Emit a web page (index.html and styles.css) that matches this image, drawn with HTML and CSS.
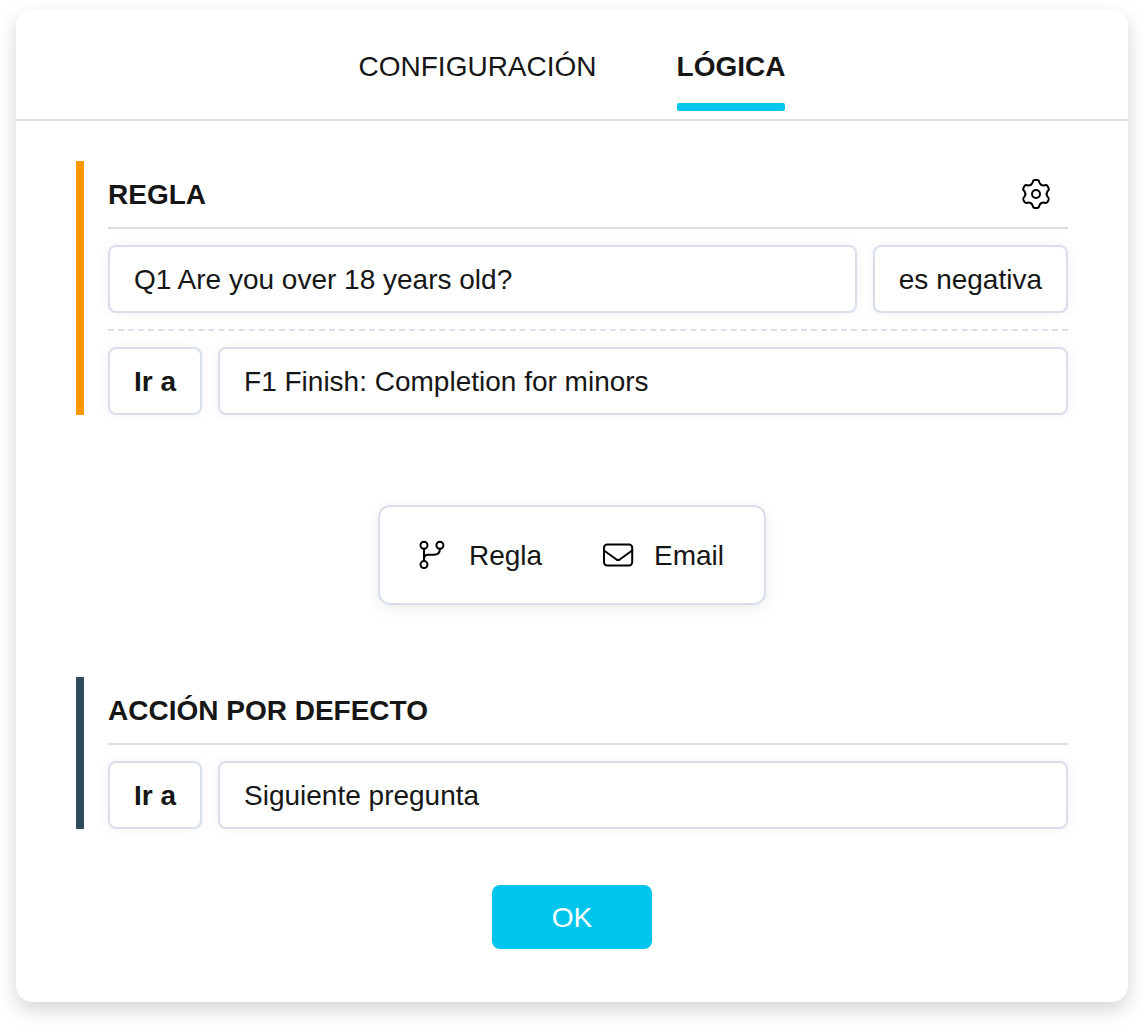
FILE: index.html
```html
<!DOCTYPE html>
<html lang="es">
<head>
  <meta charset="UTF-8" />
  <meta name="viewport" content="width=device-width, initial-scale=1.0">
  <title>Lógica</title>
  <link rel="stylesheet" href="styles.css">
</head>
<body>

  <div class="card">
    <nav class="tabs">
      <a class="tab">CONFIGURACIÓN</a>
      <a class="tab active">LÓGICA</a>
    </nav>

    <div class="content">
      <section class="block rule">
        <div class="block-header">
          <h2>REGLA</h2>
          <svg class="gear" viewBox="-18 -18 36 36">
            <path id="tooth" d="M-5.300-9.200C-3.900-10-3.600-10.500-3.300-11.700Q-2.900-13.900-1.200-13.900H1.200Q2.900-13.900 3.300-11.700C3.600-10.500 3.900-10 5.300-9.200" />
            <use href="#tooth" transform="rotate(60)" />
            <use href="#tooth" transform="rotate(120)" />
            <use href="#tooth" transform="rotate(180)" />
            <use href="#tooth" transform="rotate(240)" />
            <use href="#tooth" transform="rotate(300)" />
            <circle r="4" />
          </svg>
        </div>
        <div class="row">
          <div class="field grow">Q1 Are you over 18 years old?</div>
          <div class="field">es negativa</div>
        </div>
        <div class="row dashed">
          <div class="field strong">Ir a</div>
          <div class="field grow">F1 Finish: Completion for minors</div>
        </div>
      </section>

      <div class="add-menu">
        <div class="add-item">
          <svg class="icon branch" viewBox="0 0 26 30">
            <circle cx="5" cy="5.300" r="3.500" />
            <circle cx="20.900" cy="5.300" r="3.500" />
            <circle cx="5" cy="24.600" r="3.500" />
            <path d="M5 8.800v12.300M5 19c0-2.600 1.800-4.200 4.500-4.200h5.500c3.600 0 5.900-2.200 5.900-6" />
          </svg>
          <span>Regla</span>
        </div>
        <div class="add-item">
          <svg class="icon mail" viewBox="0 0 32 30">
            <rect x="2" y="4.500" width="28.200" height="21" rx="3.200" />
            <path d="M2 10.500l12.200 8.800q1.900 1.300 3.800 0l12.200-8.800" />
          </svg>
          <span>Email</span>
        </div>
      </div>

      <section class="block default">
        <div class="block-header">
          <h2>ACCIÓN POR DEFECTO</h2>
        </div>
        <div class="row">
          <div class="field strong">Ir a</div>
          <div class="field grow">Siguiente pregunta</div>
        </div>
      </section>

      <button class="btn">OK</button>
    </div>
  </div>

</body>
</html>
```
FILE: styles.css
```css
:root {
  --primary: #00c6ee;
  --text: #161616;
  --border: #d8dfea;
  --rule: #ff9800;
  --default: #2f4b5e;
  --white: #fff;
}

* {
  box-sizing: border-box;
}

body {
  font-family: 'Liberation Sans', Arial, sans-serif;
  font-size: 28px;
  line-height: 32px;
  color: var(--text);
  background: var(--white);
  margin: 0;
  padding: 10px 16px 30px;
}

.card {
  background: var(--white);
  height: 992px;
  border-radius: 16px;
  box-shadow: 0 8px 20px rgba(0,0,0,0.17);
}

.tabs {
  display: flex;
  justify-content: center;
  align-items: flex-end;
  gap: 80px;
  height: 111px;
  padding-bottom: 8px;
  border-bottom: 2px solid var(--border);
}

.tab {
  height: 60px;
}

.tab.active {
  font-weight: bold;
}

.tab.active::after {
  content: "";
  display: block;
  height: 8px;
  margin-top: 20px;
  border-radius: 2px;
  background: var(--primary);
}

.content {
  display: flex;
  flex-direction: column;
  align-items: center;
  padding: 40px 60px 0;
}

.block {
  width: 100%;
  padding-left: 24px;
  border-left: 8px solid;
}

.block.rule {
  border-color: var(--rule);
}

.block.default {
  border-color: var(--default);
}

.block-header {
  display: flex;
  justify-content: space-between;
  align-items: center;
  height: 68px;
  padding-right: 14px;
  margin-bottom: 16px;
  border-bottom: 2px solid var(--border);
}

h2 {
  font-size: 28px;
  margin: 0;
  padding-top: 2px;
}

svg {
  fill: none;
  stroke: #000;
  stroke-linecap: round;
  stroke-linejoin: round;
}

.gear {
  width: 36px;
  height: 36px;
  stroke-width: 2;
}

.row {
  display: flex;
  gap: 16px;
}

.row.dashed {
  margin-top: 16px;
  padding-top: 16px;
  border-top: 2px dashed var(--border);
}

.field {
  height: 68px;
  padding: 17px 24px;
  background: var(--white);
  border: 2px solid var(--border);
  border-radius: 8px;
  box-shadow: 0 0 12px rgba(0,0,0,0.06);
  white-space: nowrap;
}

.grow {
  flex: 1;
}

.strong {
  font-weight: bold;
}

.add-menu {
  display: flex;
  align-items: center;
  justify-content: space-between;
  width: 388px;
  height: 100px;
  margin: 90px 0 72px;
  padding: 0 40px 0 39px;
  border: 2px solid var(--border);
  border-radius: 12px;
  box-shadow: 0 4px 16px rgba(0,0,0,0.08);
}

.add-item {
  display: flex;
  align-items: center;
}

.add-item span {
  padding-top: 2px;
}

.icon {
  height: 30px;
  stroke-width: 2;
}

.branch {
  width: 26px;
  margin-right: 24px;
}

.mail {
  width: 32px;
  margin-right: 20px;
}

.btn {
  width: 160px;
  height: 64px;
  margin-top: 56px;
  padding: 2px 0 0;
  font: inherit;
  color: var(--white);
  background: var(--primary);
  border: none;
  border-radius: 8px;
  cursor: pointer;
}
```
